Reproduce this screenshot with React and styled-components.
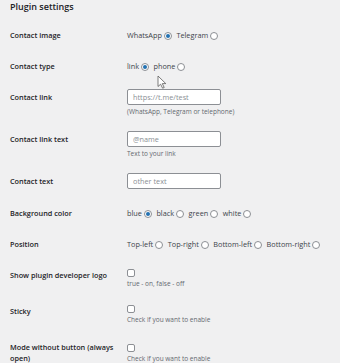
import React from "react";
import styled, { createGlobalStyle, css } from "styled-components";

const GlobalStyle = createGlobalStyle`
  html, body {
    margin: 0;
    background: #f0f0f1;
    font-family: "Open Sans", "Noto Sans", sans-serif;
    color: #1d2327;
  }
`;

const Page = styled.div`
  position: relative;
  padding: 0 10px;
`;

const Title = styled.h2`
  margin: 0 0 6px;
  font-size: 9px;
  line-height: 14px;
  font-weight: 600;
  color: #1d2327;
`;

const Row = styled.div`
  display: grid;
  grid-template-columns: 117px 1fr;
`;

const Label = styled.div`
  align-self: start;
  padding: 10px 8px 10px 0;
  font-size: 7.3px;
  line-height: 10.5px;
  font-weight: 600;
  color: #1d2327;
`;

const fieldPads = {
  radio: css`padding: 10px 0;`,
  input: css`padding: 7px 0 9px;`,
  inputHelp: css`padding: 7px 0 8px;`,
  check: css`padding: 9px 0 8px;`,
};

const Field = styled.div`
  align-self: center;
  ${(p) => fieldPads[p.$kind]}
`;

const Options = styled.div`
  display: flex;
  flex-wrap: wrap;
  align-items: center;
  line-height: 11px;
  font-size: 7.3px;
  color: #3c434a;
`;

const Option = styled.label`
  display: inline-flex;
  align-items: center;
  gap: 2px;
  margin-right: 4.5px;
  &:last-child {
    margin-right: 0;
  }
`;

const Radio = styled.input.attrs({ type: "radio" })`
  appearance: none;
  margin: 0;
  width: 8px;
  height: 8px;
  box-sizing: border-box;
  border: 1px solid #8c8f94;
  border-radius: 50%;
  background: #fff;
  display: inline-grid;
  place-content: center;
  &:checked::before {
    content: "";
    width: 4px;
    height: 4px;
    border-radius: 50%;
    background: #2271b1;
  }
`;

const Checkbox = styled.input.attrs({ type: "checkbox" })`
  appearance: none;
  display: block;
  margin: 0;
  width: 8px;
  height: 8px;
  box-sizing: border-box;
  border: 1px solid #8c8f94;
  border-radius: 2px;
  background: #fff;
`;

const TextInput = styled.input.attrs({ type: "text" })`
  display: block;
  box-sizing: border-box;
  width: 94px;
  height: 16px;
  margin: 0;
  padding: 0 5px;
  border: 1px solid #8c8f94;
  border-radius: 2px;
  background: #fff;
  font-family: inherit;
  font-size: 7.3px;
  color: #2c3338;
  &::placeholder {
    color: #8a8f94;
  }
`;

const Help = styled.p`
  margin: 3px 0 0;
  font-size: 6.5px;
  line-height: 8px;
  color: #646970;
`;

const Cursor = styled.svg`
  position: absolute;
  left: 157px;
  top: 75px;
`;

function RadioRow({ label, name, options, checked }) {
  return (
    <Row>
      <Label>{label}</Label>
      <Field $kind="radio">
        <Options>
          {options.map((o) => (
            <Option key={o}>
              {o}
              <Radio name={name} defaultChecked={o === checked} />
            </Option>
          ))}
        </Options>
      </Field>
    </Row>
  );
}

function InputRow({ label, placeholder, help }) {
  return (
    <Row>
      <Label>{label}</Label>
      <Field $kind={help ? "inputHelp" : "input"}>
        <TextInput placeholder={placeholder} />
        {help && <Help>{help}</Help>}
      </Field>
    </Row>
  );
}

function CheckRow({ label, help }) {
  return (
    <Row>
      <Label>{label}</Label>
      <Field $kind="check">
        <Checkbox />
        <Help>{help}</Help>
      </Field>
    </Row>
  );
}

export default function App() {
  return (
    <>
      <GlobalStyle />
      <Page>
        <Title>Plugin settings</Title>
        <RadioRow label="Contact image" name="img" options={["WhatsApp", "Telegram"]} checked="WhatsApp" />
        <RadioRow label="Contact type" name="type" options={["link", "phone"]} checked="link" />
        <InputRow label="Contact link" placeholder="https://t.me/test" help="(WhatsApp, Telegram or telephone)" />
        <InputRow label="Contact link text" placeholder="@name" help="Text to your link" />
        <InputRow label="Contact text" placeholder="other text" />
        <RadioRow label="Background color" name="bg" options={["blue", "black", "green", "white"]} checked="blue" />
        <RadioRow
          label="Position"
          name="pos"
          options={["Top-left", "Top-right", "Bottom-left", "Bottom-right"]}
        />
        <CheckRow label="Show plugin developer logo" help="true - on, false - off" />
        <CheckRow label="Sticky" help="Check if you want to enable" />
        <CheckRow label="Mode without button (always open)" help="Check if you want to enable" />
        <Cursor width="10" height="14" viewBox="0 0 10 14">
          <path
            d="M1 1 L1 11.5 L3.6 9.2 L5.6 13.2 L7.2 12.5 L5.3 8.6 L8.8 8.6 Z"
            fill="#fff"
            stroke="#5a5a5a"
            strokeWidth="0.8"
            strokeLinejoin="round"
          />
        </Cursor>
      </Page>
    </>
  );
}
